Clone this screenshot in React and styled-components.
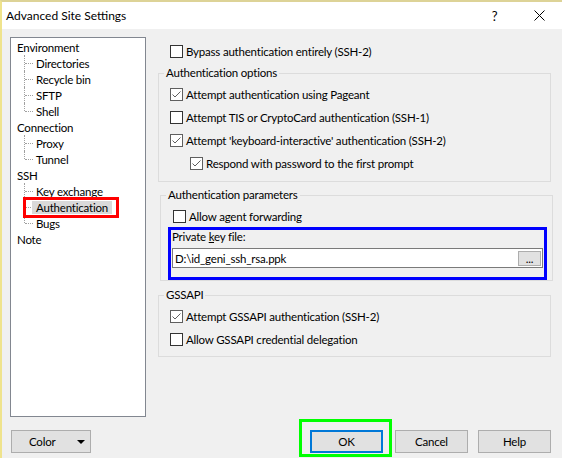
import React from "react";
import styled, { createGlobalStyle } from "styled-components";

const GlobalStyle = createGlobalStyle`
  html, body {
    margin: 0;
    padding: 0;
    background: #f0f0f0;
  }
  * {
    box-sizing: border-box;
  }
`;

const Window = styled.div`
  width: 562px;
  height: 458px;
  display: flex;
  flex-direction: column;
  overflow: hidden;
  background: #f0f0f0;
  border-top: 2px solid #ddd397;
  border-left: 2px solid #efe38c;
  font-family: Lato, "Liberation Sans", sans-serif;
  font-size: 11.5px;
  letter-spacing: -0.2px;
  color: #000;
`;

const TitleBar = styled.div`
  display: flex;
  align-items: center;
  height: 27px;
  padding-left: 4px;
  background: #fff;
`;

const Title = styled.div`
  flex: 1;
  font-size: 12px;
  letter-spacing: 0;
`;

const CaptionButton = styled.div`
  width: 45px;
  height: 27px;
  display: flex;
  align-items: center;
  justify-content: center;
  font-size: 13px;
`;

const Body = styled.div`
  flex: 1;
  display: flex;
  flex-direction: column;
  padding: 8px 0 0 8px;
`;

const Main = styled.div`
  display: flex;
  gap: 12px;
`;

const Tree = styled.div`
  width: 136px;
  height: 380px;
  padding: 1px 0 0 6px;
  background: #fff;
  border: 1px solid #828790;
`;

const TreeRow = styled.div`
  height: 16px;
  display: flex;
  align-items: center;
`;

const ChildRow = styled(TreeRow)`
  position: relative;
  padding-left: 19px;
  &::before {
    content: "";
    position: absolute;
    left: 7px;
    top: 0;
    height: ${(p) => (p.$last ? "8px" : "16px")};
    border-left: 1px dotted #a0a0a0;
  }
  &::after {
    content: "";
    position: absolute;
    left: 8px;
    top: 8px;
    width: 8px;
    border-top: 1px dotted #a0a0a0;
  }
`;

const Selected = styled.span`
  position: relative;
  z-index: 1;
  display: inline-block;
  line-height: 13px;
  padding: 0 4px;
  margin-left: -4px;
  background: #d9d9d9;
  &::after {
    content: "";
    position: absolute;
    left: -9px;
    right: -7px;
    top: -4px;
    bottom: -4px;
    border: 3px solid #ff0000;
  }
`;

const Panel = styled.div`
  width: 395px;
  display: flex;
  flex-direction: column;
`;

const Group = styled.fieldset`
  margin: ${(p) => p.$mt || 0}px 0 0 ${(p) => p.$ml || 0}px;
  padding: 0 0 ${(p) => p.$pb || 0}px 0;
  width: 393px;
  min-width: 0;
  border: 1px solid #dcdcdc;
  legend {
    margin-left: 5px;
    padding: 0 2px;
    line-height: 14px;
  }
`;

const CheckRow = styled.label`
  display: flex;
  align-items: center;
  gap: 3px;
  height: 14px;
  margin-top: ${(p) => p.$mt || 0}px;
  margin-left: ${(p) => p.$ml || 11}px;
  white-space: nowrap;
`;

const Box = styled.span`
  width: 13px;
  height: 13px;
  flex: none;
  display: flex;
  background: #fff;
  border: 1px solid ${(p) => (p.$checked ? "#5f5f5f" : "#333")};
`;

const Highlight = styled.div`
  margin: 4px 0 0 7px;
  width: 379px;
  padding: 0 0 9px;
  border: 3px solid #0000ff;
`;

const FieldLabel = styled.div`
  line-height: 14px;
  padding-left: 1px;
  u {
    text-decoration: underline;
  }
`;

const Input = styled.div`
  margin: 4px 1px 0;
  height: 20px;
  display: flex;
  align-items: center;
  justify-content: space-between;
  padding: 0 1px 0 2px;
  background: #fff;
  border: 1px solid #7a7a7a;
`;

const BrowseButton = styled.div`
  width: 23px;
  height: 15px;
  display: flex;
  align-items: flex-end;
  justify-content: center;
  line-height: 13px;
  background: #e1e1e1;
  border: 1px solid #adadad;
`;

const Footer = styled.div`
  display: flex;
  align-items: center;
  margin-top: 13px;
  padding: 0 11px 0 1px;
`;

const Button = styled.div`
  position: relative;
  width: ${(p) => p.$w || 73}px;
  height: 23px;
  margin-left: ${(p) => p.$ml || 0}px;
  display: flex;
  align-items: center;
  justify-content: center;
  background: #e1e1e1;
  border: ${(p) => (p.$default ? "2px solid #0078d7" : "1px solid #adadad")};
`;

const MenuButton = styled(Button)`
  justify-content: flex-start;
  padding: 0 5px 0 17px;
  svg {
    margin-left: auto;
  }
`;

const Annotated = styled.div`
  position: relative;
  margin-left: auto;
  &::after {
    content: "";
    position: absolute;
    left: -11px;
    right: -9px;
    top: -11px;
    bottom: -4px;
    border: 3px solid #00ff00;
    pointer-events: none;
  }
`;

const Check = ({ checked }) => (
  <Box $checked={checked}>
    {checked && (
      <svg width="11" height="11" viewBox="0 0 11 11">
        <polyline
          points="1.5,5.5 4,8 9.5,2.5"
          fill="none"
          stroke="#5f5f5f"
          strokeWidth="1"
        />
      </svg>
    )}
  </Box>
);

const Option = ({ checked, children, ...rest }) => (
  <CheckRow {...rest}>
    <Check checked={checked} />
    <span>{children}</span>
  </CheckRow>
);

const tree = [
  { name: "Environment", children: ["Directories", "Recycle bin", "SFTP", "Shell"] },
  { name: "Connection", children: ["Proxy", "Tunnel"] },
  { name: "SSH", children: ["Key exchange", "Authentication", "Bugs"] },
  { name: "Note", children: [] },
];

const App = () => (
  <>
    <GlobalStyle />
    <Window>
      <TitleBar>
        <Title>Advanced Site Settings</Title>
        <CaptionButton>?</CaptionButton>
        <CaptionButton>
          <svg width="11" height="11" viewBox="0 0 11 11">
            <path d="M0.5 0.5 L10.5 10.5 M10.5 0.5 L0.5 10.5" stroke="#000" strokeWidth="1" />
          </svg>
        </CaptionButton>
      </TitleBar>
      <Body>
        <Main>
          <Tree>
            {tree.map((node) => (
              <React.Fragment key={node.name}>
                <TreeRow>{node.name}</TreeRow>
                {node.children.map((child, i) => (
                  <ChildRow key={child} $last={i === node.children.length - 1}>
                    {child === "Authentication" ? <Selected>{child}</Selected> : child}
                  </ChildRow>
                ))}
              </React.Fragment>
            ))}
          </Tree>
          <Panel>
            <Option $mt={7} $ml={12}>Bypass authentication entirely (SSH-2)</Option>
            <Group $mt={8} $pb={11}>
              <legend>Authentication options</legend>
              <Option checked $mt={7}>Attempt authentication using Pageant</Option>
              <Option $mt={9}>Attempt TIS or CryptoCard authentication (SSH-1)</Option>
              <Option checked $mt={9}>Attempt 'keyboard-interactive' authentication (SSH-2)</Option>
              <Option checked $mt={9} $ml={31}>Respond with password to the first prompt</Option>
            </Group>
            <Group $mt={6} $ml={2}>
              <legend>Authentication parameters</legend>
              <Option $mt={7} $ml={12}>Allow agent forwarding</Option>
              <Highlight>
                <FieldLabel>
                  Private <u>k</u>ey file:
                </FieldLabel>
                <Input>
                  <span>D:\id_geni_ssh_rsa.ppk</span>
                  <BrowseButton>...</BrowseButton>
                </Input>
              </Highlight>
            </Group>
            <Group $mt={7} $pb={10}>
              <legend>GSSAPI</legend>
              <Option checked $mt={7}>Attempt GSSAPI authentication (SSH-2)</Option>
              <Option $mt={9}>Allow GSSAPI credential delegation</Option>
            </Group>
          </Panel>
        </Main>
        <Footer>
          <MenuButton $w={80}>
            Color
            <svg width="8" height="4" viewBox="0 0 8 4">
              <polygon points="0,0 8,0 4,4" fill="#000" />
            </svg>
          </MenuButton>
          <Annotated>
            <Button $default>OK</Button>
          </Annotated>
          <Button $ml={12}>Cancel</Button>
          <Button $ml={10}>Help</Button>
        </Footer>
      </Body>
    </Window>
  </>
);

export default App;
